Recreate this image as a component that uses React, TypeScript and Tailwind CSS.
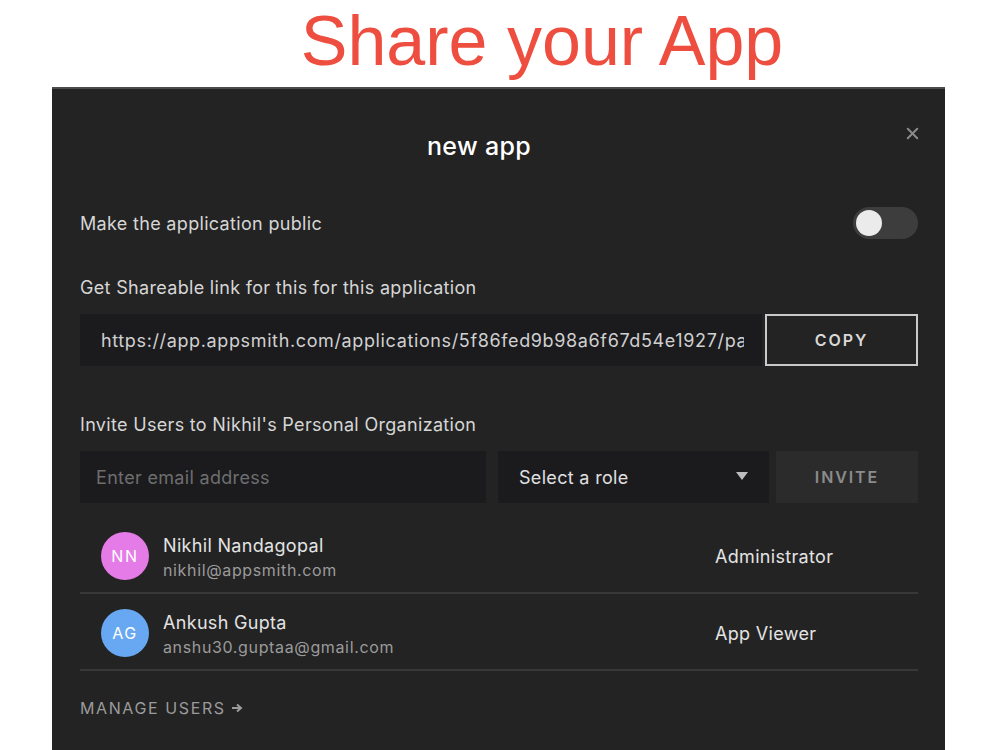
import { X } from 'lucide-react'

const users = [
  { initials: 'NN', name: 'Nikhil Nandagopal', email: 'nikhil@appsmith.com', role: 'Administrator', color: 'bg-[#e47be6]' },
  { initials: 'AG', name: 'Ankush Gupta', email: 'anshu30.guptaa@gmail.com', role: 'App Viewer', color: 'bg-[#68a8f2]' },
]

function Toggle() {
  return (
    <div className="flex h-[32px] w-[65px] items-center rounded-full bg-[#3d3d3d] px-[3px]">
      <div className="h-[26px] w-[26px] rounded-full bg-[#ebebeb]" />
    </div>
  )
}

export default function App() {
  return (
    <div className="flex h-[750px] w-[1000px] flex-col overflow-hidden bg-white font-['Inter',sans-serif] tracking-[0.02em]">
      {/* Slide title */}
      <div className="flex h-[87px] justify-center pl-[84px]">
        <h1 className="mt-[1px] font-['Liberation_Sans',Arial,sans-serif] text-[70px] leading-[80px] tracking-normal text-[#ee4e3f]">
          Share your App
        </h1>
      </div>

      {/* Modal */}
      <div className="ml-[52px] mr-[55px] flex-1 border-t-2 border-[#4b4c50] bg-[#232323] pl-[28px] pr-[27px]">
        <div className="relative flex h-[118px] items-center justify-center pb-[2px] pr-[40px]">
          <span className="text-[25px] font-medium text-white">new app</span>
          <X className="absolute right-[-4px] top-[35px] h-[19px] w-[19px] text-[#8a8a8a]" strokeWidth={2.5} />
        </div>

        <div className="flex items-center justify-between">
          <span className="text-[18px] text-[#d6d6d6]">Make the application public</span>
          <Toggle />
        </div>

        <div className="mt-[35px] text-[18px] text-[#d6d6d6]">Get Shareable link for this for this application</div>

        <div className="mt-[13px] flex h-[52px] gap-[3px]">
          <div className="flex min-w-0 flex-1 items-center bg-[#1b1b1e] pl-[21px] pr-[18px]">
            <div className="min-w-0 flex-1 overflow-hidden whitespace-nowrap text-[18px] tracking-[0.035em] text-[#d0d0d0]">
              https://app.appsmith.com/applications/5f86fed9b98a6f67d54e1927/pages
            </div>
          </div>
          <button className="w-[153px] shrink-0 border-2 border-[#c9c9c9] text-[16px] font-semibold tracking-[0.12em] text-[#d9d9d9]">
            COPY
          </button>
        </div>

        <div className="mt-[45px] text-[18px] text-[#d6d6d6]">Invite Users to Nikhil's Personal Organization</div>

        <div className="mt-[13px] flex h-[52px]">
          <div className="flex w-[406px] items-center bg-[#1b1b1e] pl-[16px] text-[18px] text-[#6e6e6e]">
            Enter email address
          </div>
          <div className="ml-[12px] flex w-[271px] items-center justify-between bg-[#1b1b1e] pl-[21px] pr-[21px]">
            <span className="mt-[1px] text-[18px] text-[#e0e0e0]">Select a role</span>
            <svg width="12" height="8" viewBox="0 0 12 8" className="mb-[2px]">
              <path d="M0 0h12L6 8z" fill="#bdbdbd" />
            </svg>
          </div>
          <button className="ml-[7px] flex-1 bg-[#2b2b2b] text-[16px] font-semibold tracking-[0.12em] text-[#8c8c8c]">
            INVITE
          </button>
        </div>

        <div className="mt-[14px]">
          {users.map((u) => (
            <div key={u.email} className="flex h-[77px] items-center border-b-2 border-[#383838] pl-[21px]">
              <div className={`mt-[2px] flex h-[48px] w-[48px] items-center justify-center rounded-full ${u.color} text-[16px] tracking-[0.1em] text-white`}>
                {u.initials}
              </div>
              <div className="ml-[14px] mt-[6px] flex w-[552px] flex-col">
                <span className="text-[18px] leading-[24px] text-[#e3e3e3]">{u.name}</span>
                <span className="text-[16px] leading-[24px] tracking-[0.04em] text-[#9b9b9b]">{u.email}</span>
              </div>
              <span className="mt-[4px] text-[18px] text-[#e3e3e3]">{u.role}</span>
            </div>
          ))}
        </div>

        <div className="mt-[25px] flex items-center gap-[6px] text-[16px] tracking-[0.1em] text-[#9b9b9b]">
          MANAGE USERS
          <svg width="11" height="10" viewBox="0 0 11 10">
            <path d="M0 5h8M5 1.5L9 5 5 8.5" stroke="#9b9b9b" strokeWidth="2" fill="none" />
          </svg>
        </div>
      </div>
    </div>
  )
}
